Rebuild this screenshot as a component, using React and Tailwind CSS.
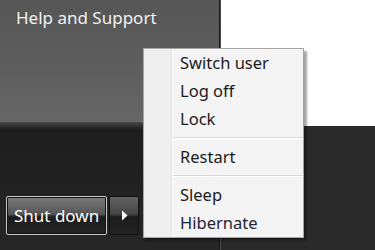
import { useState } from "react";

const font = { fontFamily: '"Noto Sans", "Open Sans", sans-serif' };

function MenuItem({ label, dark }) {
  return (
    <div className="flex h-[28px] items-center">
      <div className="h-full w-[27px] bg-[#efefef]" />
      <div className="h-full w-px bg-[#e2e2e2]" />
      <div className="h-full w-px bg-white" />
      <span className={`pl-[7px] text-[16.5px] leading-none ${dark ? "text-[#1c2533]" : "text-[#1a1a1a]"}`}>{label}</span>
    </div>
  );
}

function Separator() {
  return (
    <div className="flex h-[10px]">
      <div className="h-full w-[27px] bg-[#efefef]" />
      <div className="h-full w-px bg-[#e2e2e2]" />
      <div className="h-full w-px bg-white" />
      <div className="flex flex-1 flex-col pt-[4px]">
        <div className="h-px bg-[#d9d9d9]" />
        <div className="h-px bg-white" />
      </div>
    </div>
  );
}

export default function App() {
  const [open] = useState(true);

  return (
    <div className="relative flex h-[250px] w-[375px] overflow-hidden bg-[#2a2a2a]" style={font}>
      {/* left start panel */}
      <div className="flex w-[219px] flex-col">
        <div className="h-[122px] bg-gradient-to-b from-[#565656] via-[#5d5d5d] to-[#666666] pl-[16px] pt-[5px]">
          <span className="text-[17px] text-[#f2f2f2]">Help and Support</span>
        </div>
        <div className="h-[7px] bg-gradient-to-b from-[#4a4a4a] to-[#1f1f1f]" />
        <div className="flex flex-1 flex-col justify-end bg-gradient-to-b from-[#1e1e1e] to-[#262626] pb-[15px] pl-[6px]">
          <div className="flex items-center gap-[2px]">
            <div className="flex h-[39px] w-[101px] items-center rounded-[2px] border border-[#c9c9c9] bg-[linear-gradient(to_bottom,#7a7a7a_0%,#565656_46%,#1c1c1c_54%,#252525_100%)] pl-[7px] shadow-[inset_0_0_0_1px_#111]">
              <span className="text-[17px] leading-none text-white">Shut down</span>
            </div>
            <div className="flex h-[39px] w-[30px] items-center justify-center rounded-[2px] border border-[#111] bg-[linear-gradient(to_bottom,#626262_0%,#444444_46%,#1c1c1c_54%,#232323_100%)]">
              <svg width="7" height="11" viewBox="0 0 7 11">
                <path d="M1 0.5 L6.5 5.5 L1 10.5 Z" fill="#ffffff" />
              </svg>
            </div>
          </div>
        </div>
      </div>
      <div className="w-px bg-[#1a1a1a]" />
      <div className="w-px bg-[#4a4a4a]" />
      {/* right area */}
      <div className="flex flex-1 flex-col">
        <div className="h-[126px] bg-white" />
        <div className="flex-1 bg-[#2a2a2a]" />
      </div>

      {open && (
        <div className="absolute left-[143px] top-[48px] w-[161px] border border-[#a5a5a5] bg-[#f4f4f4] shadow-[3px_3px_2px_rgba(0,0,0,0.35)]">
          <MenuItem label="Switch user" />
          <MenuItem label="Log off" />
          <MenuItem label="Lock" />
          <Separator />
          <MenuItem label="Restart" />
          <Separator />
          <MenuItem label="Sleep" />
          <MenuItem label="Hibernate" dark />
        </div>
      )}
    </div>
  );
}
